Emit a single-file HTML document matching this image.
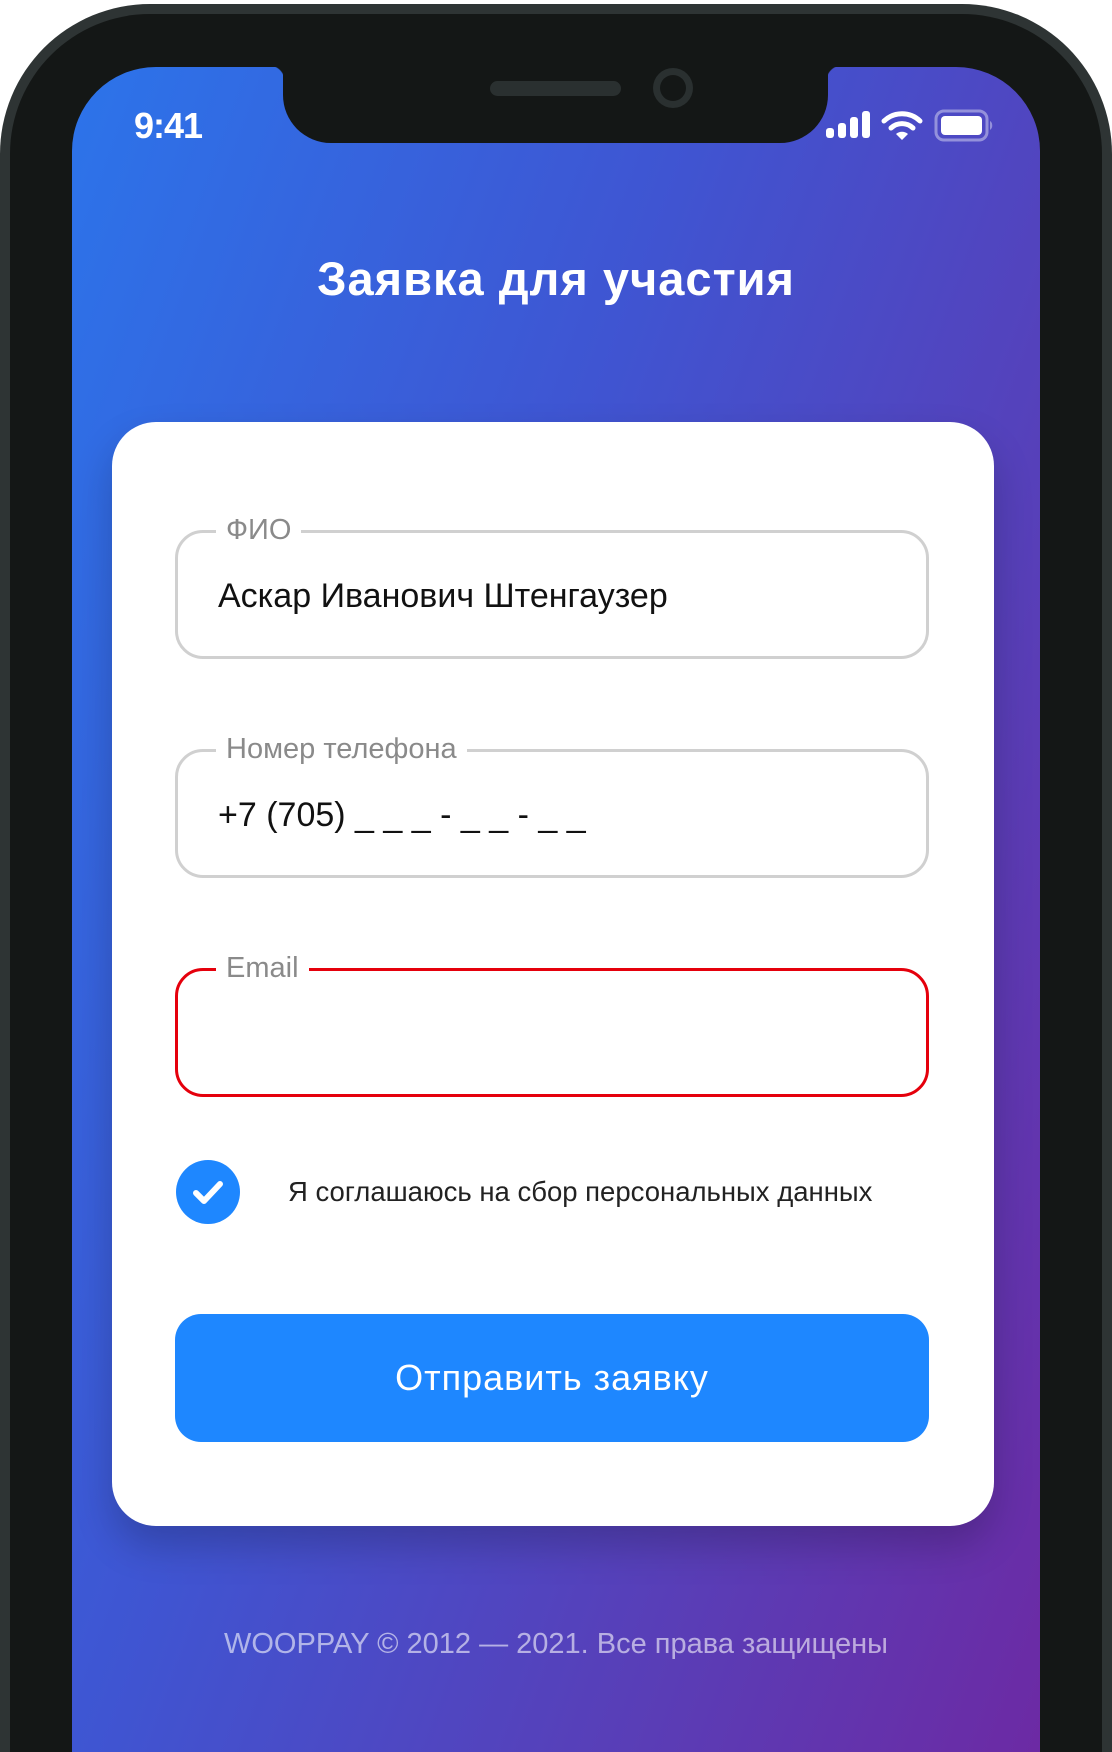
<!DOCTYPE html>
<html><head><meta charset="utf-8"><style>
*{margin:0;padding:0;box-sizing:border-box}
html,body{width:1112px;height:1752px;overflow:hidden;background:#fff}
body{font-family:"Liberation Sans","DejaVu Sans",sans-serif}
.wrap{position:relative;width:1112px;height:1752px;overflow:hidden}
.frame{position:absolute;left:0;top:4px;width:1112px;height:1748px;background:#2e3434;border-radius:150px 150px 0 0}
.bezel{position:absolute;left:10px;top:14px;width:1092px;height:1738px;background:#141716;border-radius:140px 140px 0 0}
.screen{position:absolute;left:72px;top:67px;width:968px;height:1685px;border-radius:84px 84px 0 0;overflow:hidden;background:linear-gradient(110deg,#2c74ea 0%,#3f55d2 40%,#5a3db6 75%,#6c2aa4 100%)}
.notch{position:absolute;left:211px;top:-2px;width:545px;height:78px;background:#141716;border-radius:0 0 48px 48px}
.notch:before{content:"";position:absolute;left:-14px;top:0;width:16px;height:16px;background:radial-gradient(circle at 0 100%,transparent 15px,#141716 16px)}
.notch:after{content:"";position:absolute;right:-14px;top:0;width:16px;height:16px;background:radial-gradient(circle at 100% 100%,transparent 15px,#141716 16px)}
.spk{position:absolute;left:207px;top:16px;width:131px;height:15px;background:#2a3030;border-radius:8px}
.cam{position:absolute;left:370px;top:3px;width:40px;height:40px;border-radius:50%;background:#2a3030}
.cam:after{content:"";position:absolute;left:7px;top:7px;width:26px;height:26px;border-radius:50%;background:#141716}
.time{position:absolute;left:62px;top:38px;color:#fff;font-size:36px;font-weight:bold;letter-spacing:-1px}
.title{position:absolute;left:0;width:968px;top:184px;text-align:center;color:#fff;font-size:47px;font-weight:bold;letter-spacing:1px}
.card{position:absolute;left:40px;top:355px;width:882px;height:1104px;background:#fff;border-radius:44px;box-shadow:0 20px 40px rgba(0,0,0,.2)}
.field{position:absolute;left:63px;width:754px;height:129px;border:3px solid #d0d0d0;border-radius:28px}
.field.err{border-color:#e5000c}
.field label{position:absolute;left:38px;top:-21px;background:#fff;padding:0 10px;font-size:29px;color:#8a8a8a;line-height:36px}
.field span{position:absolute;left:40px;top:44px;font-size:34px;color:#111}
.chk{position:absolute;left:64px;top:738px;width:64px;height:64px;border-radius:50%;background:#1e87ff}
.agree{position:absolute;left:176px;top:754px;font-size:27.5px;color:#222}
.btn{position:absolute;left:63px;top:892px;width:754px;height:128px;background:#1e87ff;border-radius:26px;color:#fff;font-size:36px;text-align:center;line-height:128px;letter-spacing:1px}
.foot{position:absolute;left:0;width:968px;top:1561px;text-align:center;color:rgba(255,255,255,.58);font-size:29px}
</style></head><body><div class="wrap">
<div class="frame"></div><div class="bezel"></div>
<div class="screen">
<div class="notch"><div class="spk"></div><div class="cam"></div></div>
<div class="time">9:41</div>
<svg style="position:absolute;left:754px;top:42px" width="172" height="36" viewBox="0 0 172 36">
<rect x="0" y="19" width="8" height="10" rx="3" fill="#fff"/>
<rect x="12" y="14" width="8" height="15" rx="3" fill="#fff"/>
<rect x="24" y="8" width="8" height="21" rx="3" fill="#fff"/>
<rect x="36" y="2" width="8" height="27" rx="3" fill="#fff"/>
<path d="M58 12 A26 26 0 0 1 94 12" stroke="#fff" stroke-width="5" fill="none" stroke-linecap="round"/>
<path d="M65 19 A16 16 0 0 1 87 19" stroke="#fff" stroke-width="5" fill="none" stroke-linecap="round"/>
<path d="M70 25 L76 31 L82 25 A9 9 0 0 0 70 25Z" fill="#fff"/>
<rect x="110" y="2" width="51" height="29" rx="8" fill="none" stroke="rgba(255,255,255,.4)" stroke-width="3"/>
<rect x="115" y="7" width="41" height="19" rx="4" fill="#fff"/>
<path d="M164 12 a4 5 0 0 1 0 9Z" fill="rgba(255,255,255,.4)"/>
</svg>
<div class="title">Заявка для участия</div>
<div class="card">
<div class="field" style="top:108px"><label>ФИО</label><span>Аскар Иванович Штенгаузер</span></div>
<div class="field" style="top:327px"><label>Номер телефона</label><span>+7 (705) _ _ _ - _ _ - _ _</span></div>
<div class="field err" style="top:546px"><label>Email</label></div>
<div class="chk"><svg width="64" height="64" viewBox="0 0 64 64"><path d="M20 33 L28 41 L44 24" stroke="#fff" stroke-width="6" fill="none" stroke-linecap="round" stroke-linejoin="round"/></svg></div>
<div class="agree">Я соглашаюсь на сбор персональных данных</div>
<div class="btn">Отправить заявку</div>
</div>
<div class="foot">WOOPPAY © 2012 — 2021. Все права защищены</div>
</div>
</div></body></html>
